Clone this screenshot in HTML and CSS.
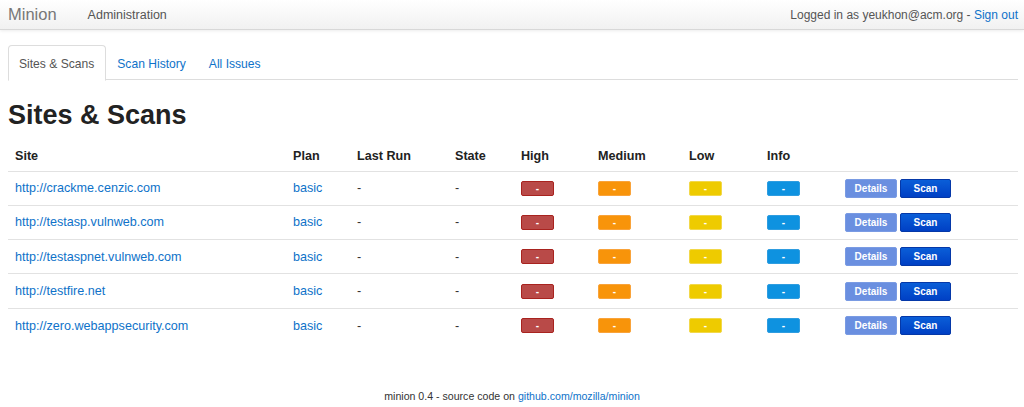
FILE: index.html
```html
<!DOCTYPE html>
<html>
<head>
<meta charset="utf-8">
<title>Minion</title>
<link rel="stylesheet" href="styles.css">
</head>
<body>
<header class="navbar">
  <div class="nav-left">
    <a class="brand" href="#">Minion</a>
    <a class="nav-link" href="#">Administration</a>
  </div>
  <div class="nav-right">Logged in as yeukhon@acm.org - <a href="#">Sign out</a></div>
</header>
<main class="container">
  <ul class="tabs">
    <li class="tab active"><a href="#">Sites &amp; Scans</a></li>
    <li class="tab"><a href="#">Scan History</a></li>
    <li class="tab"><a href="#">All Issues</a></li>
  </ul>
  <h1 class="title">Sites &amp; Scans</h1>
  <table class="sites">
    <thead>
      <tr>
        <th class="c-site">Site</th>
        <th class="c-plan">Plan</th>
        <th class="c-run">Last Run</th>
        <th class="c-state">State</th>
        <th class="c-high">High</th>
        <th class="c-med">Medium</th>
        <th class="c-low">Low</th>
        <th class="c-info">Info</th>
        <th class="c-act"></th>
      </tr>
    </thead>
    <tbody>
      <tr>
        <td><a href="#">http://crackme.cenzic.com</a></td>
        <td><a href="#">basic</a></td>
        <td>-</td><td>-</td>
        <td><span class="badge high">-</span></td>
        <td><span class="badge med">-</span></td>
        <td><span class="badge low">-</span></td>
        <td><span class="badge info">-</span></td>
        <td><span class="btn details">Details</span><span class="btn scan">Scan</span></td>
      </tr>
      <tr>
        <td><a href="#">http://testasp.vulnweb.com</a></td>
        <td><a href="#">basic</a></td>
        <td>-</td><td>-</td>
        <td><span class="badge high">-</span></td>
        <td><span class="badge med">-</span></td>
        <td><span class="badge low">-</span></td>
        <td><span class="badge info">-</span></td>
        <td><span class="btn details">Details</span><span class="btn scan">Scan</span></td>
      </tr>
      <tr>
        <td><a href="#">http://testaspnet.vulnweb.com</a></td>
        <td><a href="#">basic</a></td>
        <td>-</td><td>-</td>
        <td><span class="badge high">-</span></td>
        <td><span class="badge med">-</span></td>
        <td><span class="badge low">-</span></td>
        <td><span class="badge info">-</span></td>
        <td><span class="btn details">Details</span><span class="btn scan">Scan</span></td>
      </tr>
      <tr>
        <td><a href="#">http://testfire.net</a></td>
        <td><a href="#">basic</a></td>
        <td>-</td><td>-</td>
        <td><span class="badge high">-</span></td>
        <td><span class="badge med">-</span></td>
        <td><span class="badge low">-</span></td>
        <td><span class="badge info">-</span></td>
        <td><span class="btn details">Details</span><span class="btn scan">Scan</span></td>
      </tr>
      <tr>
        <td><a href="#">http://zero.webappsecurity.com</a></td>
        <td><a href="#">basic</a></td>
        <td>-</td><td>-</td>
        <td><span class="badge high">-</span></td>
        <td><span class="badge med">-</span></td>
        <td><span class="badge low">-</span></td>
        <td><span class="badge info">-</span></td>
        <td><span class="btn details">Details</span><span class="btn scan">Scan</span></td>
      </tr>
    </tbody>
  </table>
</main>
<footer class="footer">minion 0.4 - source code on <a href="#">github.com/mozilla/minion</a></footer>
</body>
</html>
```

FILE: styles.css
```css
* { box-sizing: border-box; }
html, body { margin: 0; padding: 0; }
body {
  font-family: "Liberation Sans", Arial, sans-serif;
  font-size: 13px;
  color: #333;
  background: #fff;
  width: 1024px;
  height: 407px;
  overflow: hidden;
}
a { color: #0e72c9; text-decoration: none; }

.navbar {
  height: 30px;
  display: flex;
  justify-content: space-between;
  align-items: center;
  padding: 0 6px 0 8px;
  background: linear-gradient(#ffffff, #f1f1f1);
  border-bottom: 1px solid #d8d8d8;
  box-shadow: 0 1px 3px rgba(0,0,0,0.08);
}
.nav-left { display: flex; align-items: center; }
.brand { font-size: 16.5px; color: #777; }
.nav-link { font-size: 12.5px; color: #555; margin-left: 31px; }
.nav-right { font-size: 12px; color: #555; }

.container { padding: 15px 6px 0 8px; }

.tabs {
  list-style: none;
  margin: 0;
  padding: 0;
  display: flex;
  border-bottom: 1px solid #ddd;
  height: 35px;
}
.tab a {
  display: block;
  height: 35px;
  line-height: 36px;
  padding: 0 11px 0 10px;
  font-size: 12.1px;
  color: #0e72c9;
  border: 1px solid transparent;
  border-radius: 4px 4px 0 0;
}
.tab.active a {
  color: #555;
  background: #fff;
  border-color: #ddd #ddd transparent;
  height: 36px;
}

.title {
  font-size: 27px;
  font-weight: bold;
  color: #222;
  margin: 19px 0 0 0;
  line-height: 32px;
}

.sites {
  width: 1010px;
  border-collapse: collapse;
  margin-top: 10px;
}
.sites th, .sites td {
  text-align: left;
  padding: 0 7px;
  vertical-align: middle;
  font-size: 12.6px;
}
.sites th { font-weight: bold; color: #222; height: 30px; }
.sites td { height: 34.3px; }
.sites tbody td { border-top: 1px solid #e2e2e2; }
.c-site { width: 278px; }
.c-plan { width: 64px; }
.c-run { width: 98px; }
.c-state { width: 66px; }
.c-high { width: 77px; }
.c-med { width: 91px; }
.c-low { width: 78px; }
.c-info { width: 78px; }

.badge {
  display: inline-block;
  width: 33px;
  height: 15px;
  line-height: 13px;
  text-align: center;
  color: #fff;
  font-weight: bold;
  font-size: 10px;
  border-radius: 2px;
  border: 1px solid;
  vertical-align: middle;
}
.badge.high { background: #b94a48; border-color: #a8231f; }
.badge.med { background: #f8940a; border-color: #f9a33a; }
.badge.low { background: #eecb00; border-color: #f2d84a; }
.badge.info { background: #0e92e0; border-color: #2f9de0; }

.btn {
  display: inline-block;
  height: 19px;
  line-height: 17px;
  font-size: 10px;
  font-weight: bold;
  color: #fff;
  text-align: center;
  border-radius: 2px;
  vertical-align: middle;
  border: 1px solid;
}
.btn.details {
  width: 52px;
  background: #6a8fe0;
  border-color: #7a9be3;
}
.btn.scan {
  width: 51px;
  margin-left: 3px;
  background: linear-gradient(#0a5ed8, #0040c4);
  border-color: #0538a8;
}

.footer {
  text-align: center;
  font-size: 10.6px;
  color: #333;
  margin-top: 48px;
}
```
